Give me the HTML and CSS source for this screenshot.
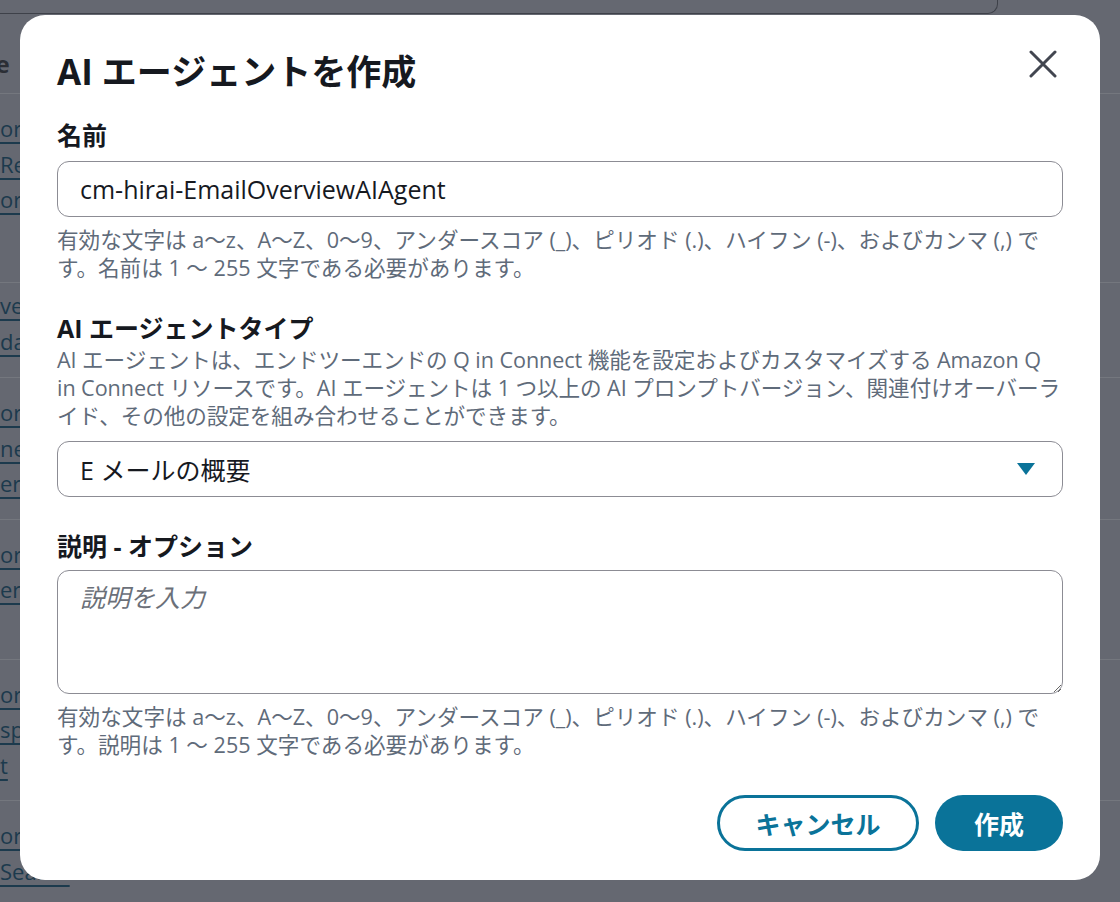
FILE: index.html
```html
<!DOCTYPE html>
<html lang="ja">
<head>
  <meta charset="UTF-8">
  <title>AI エージェントを作成</title>
  <link rel="stylesheet" href="styles.css">
</head>
<body>

  <!-- Console page behind the dialog -->
  <div class="console">
    <div class="topbar"></div>
    <div class="table-head"><span>Name</span></div>
    <div class="row row-tall">
      <a href="#">orchestration-prompt</a>
      <a href="#">Response-generation</a>
      <a href="#">orchestrator-agent</a>
    </div>
    <div class="row row-short">
      <a href="#">verview-agent</a>
      <a href="#">data-agent</a>
    </div>
    <div class="row">
      <a href="#">orchestration</a>
      <a href="#">nectAgent</a>
      <a href="#">erAgent</a>
    </div>
    <div class="row">
      <a href="#">orchestration</a>
      <a href="#">erAgent</a>
    </div>
    <div class="row">
      <a href="#">orchestration</a>
      <a href="#">sponse</a>
      <a href="#">t</a>
    </div>
    <div class="row">
      <a href="#">orchestration</a>
      <a href="#">Search</a>
    </div>
  </div>

  <!-- Create AI agent dialog -->
  <div class="overlay">
    <div class="modal">
      <div class="modal-header">
        <h2>AI エージェントを作成</h2>
        <button class="close-btn" aria-label="閉じる">
          <svg width="28" height="28" viewBox="0 0 28 28">
            <path d="M2 2 L26 26 M26 2 L2 26" stroke="#424650" stroke-width="3" stroke-linecap="round" fill="none"/>
          </svg>
        </button>
      </div>

      <div class="field">
        <label class="label">名前</label>
        <input class="text-input" type="text" value="cm-hirai-EmailOverviewAIAgent">
        <p class="hint">有効な文字は a〜z、A〜Z、0〜9、アンダースコア (_)、ピリオド (.)、ハイフン (-)、およびカンマ (,) です。名前は 1 〜 255 文字である必要があります。</p>
      </div>

      <div class="field field-type">
        <label class="label">AI エージェントタイプ</label>
        <p class="desc">AI エージェントは、エンドツーエンドの Q in Connect 機能を設定およびカスタマイズする Amazon Q in Connect リソースです。AI エージェントは 1 つ以上の AI プロンプトバージョン、関連付けオーバーライド、その他の設定を組み合わせることができます。</p>
        <button class="select">
          <span>E メールの概要</span>
          <svg width="18" height="12" viewBox="0 0 18 12">
            <path d="M0 0 H18 L9 12 Z" fill="#0a7399"/>
          </svg>
        </button>
      </div>

      <div class="field field-desc">
        <label class="label">説明 - オプション</label>
        <textarea class="text-area" placeholder="説明を入力"></textarea>
        <p class="hint">有効な文字は a〜z、A〜Z、0〜9、アンダースコア (_)、ピリオド (.)、ハイフン (-)、およびカンマ (,) です。説明は 1 〜 255 文字である必要があります。</p>
      </div>

      <div class="actions">
        <button class="btn btn-outline">キャンセル</button>
        <button class="btn btn-primary">作成</button>
      </div>
    </div>
  </div>

</body>
</html>
```

FILE: styles.css
```css
body {
  margin: 0;
  width: 1120px;
  height: 902px;
  overflow: hidden;
  background: #656871;
  font-family: "Open Sans", "Noto Sans CJK JP", sans-serif;
}

/* background console */
.console {
  width: 1120px;
}
.topbar {
  width: 997px;
  height: 13px;
  border-right: 1px solid #3e4149;
  border-bottom: 1px solid #3e4149;
  border-bottom-right-radius: 10px;
}
.table-head {
  height: 80px;
  border-bottom: 1px solid #74777e;
  font-size: 24px;
  font-weight: bold;
  color: #2b2e35;
  line-height: 60px;
  padding-top: 20px;
  box-sizing: border-box;
  text-indent: -62px;
}
.row {
  display: flex;
  flex-direction: column;
  padding: 17px 0;
  border-bottom: 1px solid #74777e;
  min-height: 140px;
  box-sizing: border-box;
}
.row-tall {
  min-height: 189px;
}
.row-short {
  min-height: 95px;
  padding-top: 5px;
}
.row a {
  font-size: 22px;
  line-height: 35.5px;
  color: #1c3a4d;
  text-decoration: underline;
  text-underline-offset: 5px;
  align-self: flex-start;
}

/* dialog */
.overlay {
  position: absolute;
  top: 0;
  left: 0;
  width: 1120px;
  height: 902px;
  padding: 15px 20px 22px;
  box-sizing: border-box;
}
.modal {
  width: 1080px;
  height: 865px;
  background: #fff;
  border-radius: 25px;
  padding: 37px 37px 29px;
  box-sizing: border-box;
  display: flex;
  flex-direction: column;
}
.modal-header {
  display: flex;
  justify-content: space-between;
  align-items: flex-start;
}
.modal-header h2 {
  margin: 0;
  font-size: 35px;
  line-height: 40px;
  font-weight: bold;
  color: #16191f;
}
.close-btn {
  border: none;
  background: none;
  padding: 0;
  margin: -2px 6px 0 0;
  width: 28px;
  height: 28px;
  cursor: pointer;
}
.close-btn svg {
  display: block;
}

.field {
  display: flex;
  flex-direction: column;
  margin-top: 27px;
}
.field-type {
  margin-top: 30px;
}
.field-desc {
  margin-top: 33px;
}
.label {
  font-size: 25px;
  line-height: 32px;
  font-weight: bold;
  color: #16191f;
  margin-bottom: 10px;
}
.field-type .label {
  margin-bottom: 2px;
}
.field-desc .label {
  margin-bottom: 8px;
}
.text-input,
.select,
.text-area {
  box-sizing: border-box;
  width: 100%;
  border: 1px solid #8c8c94;
  border-radius: 12px;
  background: #fff;
  font-family: inherit;
  font-size: 25px;
  color: #16191f;
}
.text-input {
  height: 56px;
  padding: 0 22px;
}
.select {
  height: 56px;
  padding: 0 27px 0 22px;
  display: flex;
  align-items: center;
  justify-content: space-between;
  text-align: left;
  cursor: pointer;
}
.text-area {
  height: 124px;
  padding: 10px 22px;
  line-height: 32px;
  resize: vertical;
}
.text-area::placeholder {
  color: #6b7079;
  font-style: italic;
}
.hint,
.desc {
  margin: 0;
  font-size: 21.6px;
  line-height: 28px;
  color: #5f6b7a;
}
.hint {
  margin-top: 9px;
}
.desc {
  margin-bottom: 11px;
  letter-spacing: -0.07px;
}

.actions {
  margin-top: auto;
  display: flex;
  justify-content: flex-end;
  gap: 16px;
}
.btn {
  height: 56px;
  border-radius: 28px;
  font-family: inherit;
  font-size: 25px;
  font-weight: bold;
  cursor: pointer;
  box-sizing: border-box;
}
.btn-outline {
  width: 202px;
  background: #fff;
  color: #0a7399;
  border: 3px solid #0a7399;
}
.btn-primary {
  width: 128px;
  background: #0a7399;
  color: #fff;
  border: none;
}
.btn-primary:hover {
  background: #075e7e;
}
```
